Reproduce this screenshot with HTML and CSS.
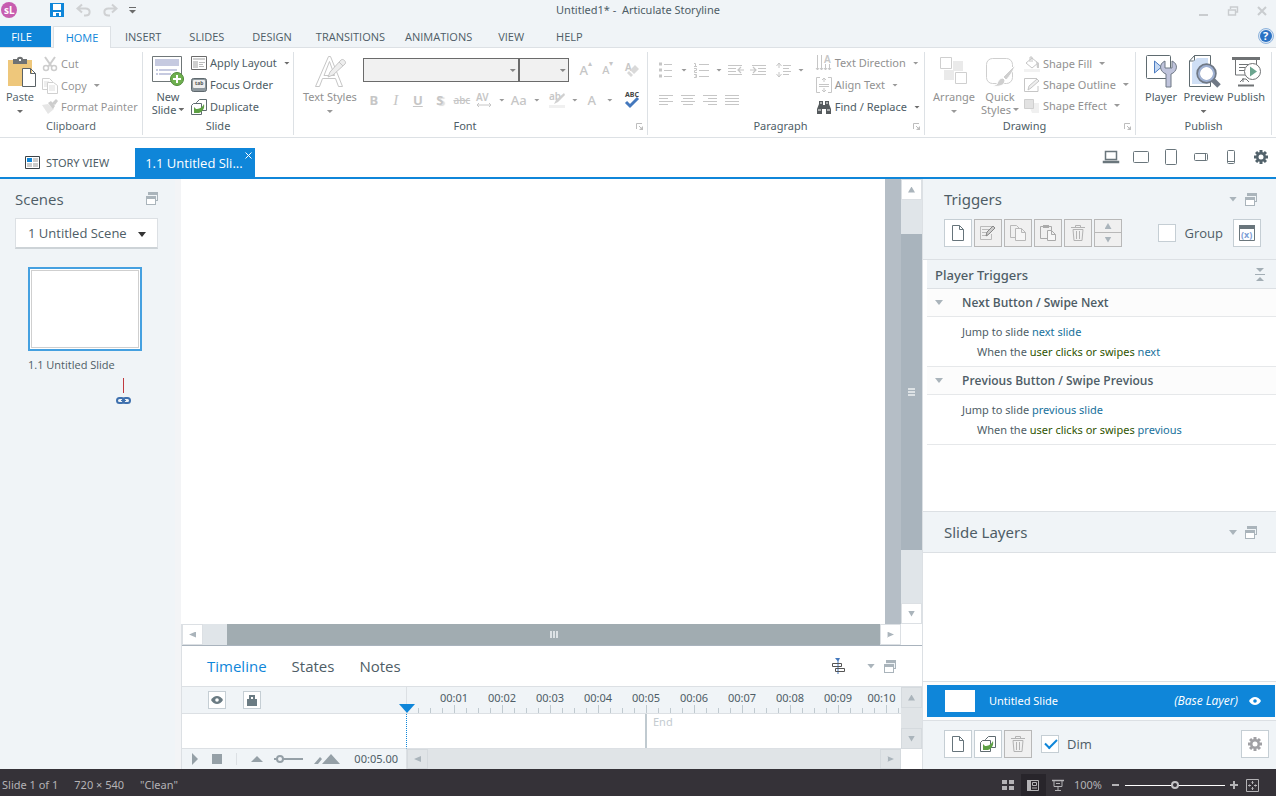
FILE: index.html
```html
<!DOCTYPE html>
<html lang="en">
<head>
    <meta charset="UTF-8">
    <title>Untitled1* - Articulate Storyline</title>
    <link rel="stylesheet" href="styles.css">
</head>
<body>
    <!-- shared icons -->
    <svg class="sprite" width="0" height="0">
        <symbol id="i-page" viewBox="0 0 14 18"><path d="M1.5 1.5h7l4 4v11h-11z M8.5 1.5v4h4" fill="#fff" stroke="currentColor"/></symbol>
        <symbol id="i-copy" viewBox="0 0 18 18"><path d="M1.5 1.5h6l3 3v9h-9z" fill="none" stroke="currentColor"/><path d="M6.5 4.5h6l4 4v8h-10z M12.5 4.5v4h4" fill="#f6f6f6" stroke="currentColor"/></symbol>
        <symbol id="i-trash" viewBox="0 0 16 18"><path d="M1 3.5h14 M5.500 3.500v-2h5v2 M3 5.500l1 11h8l1-11z M6.500 7v8 M9.500 7v8" fill="none" stroke="#b3b3b3"/></symbol>
        <symbol id="i-window" viewBox="0 0 12 13"><path d="M2 0h10v9H9V4H2z" fill="#aab4bb"/><path d="M4 3h7v5h-1V4H2V3z" fill="#f0f4f7"/><path d="M0 4h10v9H0z" fill="#aab4bb"/><path d="M1 7h8v5H1z" fill="#fff"/></symbol>
        <symbol id="i-dup" viewBox="0 0 16 16"><path d="M5.500 3.500l3-3h7v11h-10z M3.500 5.500h7v8h-7z" fill="#fff" stroke="#5f6b70"/><path d="M.5 6.500l2-2h8v11H.5z" fill="#fff" stroke="#5f6b70"/><path d="M3 8l2 2c3 0 6-1 8-5 1 5-2 8-5 9H3z" fill="#5da044"/></symbol>
        <symbol id="i-launch" viewBox="0 0 8 8"><path d="M.5 6V.5H6 M3 3l3 3" fill="none" stroke="#bdbdbd"/><path d="M7 3v4H3z" fill="#bdbdbd"/></symbol>
        <symbol id="i-eye" viewBox="0 0 12 8"><path d="M0 4C3-1.300 9-1.300 12 4 9 9.300 3 9.300 0 4z" fill="currentColor"/><circle cx="6" cy="4" r="1.800" class="pupil"/></symbol>
        <symbol id="i-gear" viewBox="-8 -8 16 16"><g fill="currentColor"><path d="M-1.500-7h3v14h-3z"/><path d="M-1.500-7h3v14h-3z" transform="rotate(45)"/><path d="M-1.500-7h3v14h-3z" transform="rotate(90)"/><path d="M-1.500-7h3v14h-3z" transform="rotate(135)"/><circle r="5"/></g><circle r="2.500" fill="#fff"/></symbol>
    </svg>

    <header class="titlebar">
        <div class="quick">
            <svg class="logo" width="16" height="18" viewBox="0 0 16 18"><circle cx="8" cy="9" r="8" fill="#c75db0"/><text x="3" y="13" class="logo-text">sL</text></svg>
            <button class="icon-btn" aria-label="Save"><svg width="14" height="14" viewBox="0 0 14 14"><path d="M0 0h14v14H0z" fill="#0f86d9"/><path d="M3 1h8v6H3z M3 9h8v4H3z" fill="#fff"/><path d="M6 10h3v3H6z" fill="#0f86d9"/></svg></button>
            <button class="icon-btn" aria-label="Undo" disabled><svg width="15" height="13" viewBox="0 0 15 13"><path d="M6 .5L1.500 4.500 6 8.500 M2 4.500h7.500c5.500 0 5.500 7 0 7H8" fill="none" stroke="#cfd1d3" stroke-width="2"/></svg></button>
            <button class="icon-btn" aria-label="Redo" disabled><svg width="15" height="13" viewBox="0 0 15 13"><path d="M9 .5l4.500 4L9 8.500 M13 4.500H5.500c-5.500 0-5.500 7 0 7H7" fill="none" stroke="#cfd1d3" stroke-width="2"/></svg></button>
            <button class="icon-btn" aria-label="Customize"><svg width="7" height="7" viewBox="0 0 7 7"><path d="M0 .5h7" stroke="#6b6b6b"/><path d="M0 3h7L3.500 6.500z" fill="#6b6b6b"/></svg></button>
        </div>
        <div class="title">Untitled1* -&nbsp; Articulate Storyline</div>
        <div class="winctl">
            <button class="icon-btn" aria-label="Minimize"><svg width="12" height="12" viewBox="0 0 12 12"><path d="M1 10h9" stroke="#c9cccf" stroke-width="2"/></svg></button>
            <button class="icon-btn" aria-label="Restore"><svg width="12" height="12" viewBox="0 0 12 12"><path d="M3.500 4V2h7v5H8 M1.500 5h7v5h-7z" fill="none" stroke="#c9cccf" stroke-width="1.400"/></svg></button>
            <button class="icon-btn" aria-label="Close"><svg width="12" height="12" viewBox="0 0 12 12"><path d="M2 2l8 8M10 2l-8 8" stroke="#c9cccf" stroke-width="2"/></svg></button>
        </div>
    </header>

    <nav class="menu">
        <button class="menu-tab file">FILE</button>
        <button class="menu-tab home">HOME</button>
        <button class="menu-tab">INSERT</button>
        <button class="menu-tab">SLIDES</button>
        <button class="menu-tab">DESIGN</button>
        <button class="menu-tab wide">TRANSITIONS</button>
        <button class="menu-tab wide">ANIMATIONS</button>
        <button class="menu-tab short">VIEW</button>
        <button class="menu-tab short">HELP</button>
        <button class="icon-btn help" aria-label="Help"><svg width="16" height="16" viewBox="0 0 16 16"><circle cx="8" cy="8" r="7.500" fill="#dbe7f5" stroke="#8fb4dd"/><circle cx="8" cy="8" r="6" fill="#2a72c4"/><text x="5" y="12" class="help-text">?</text></svg></button>
    </nav>

    <div class="ribbon">
        <section class="group g-clipboard">
            <div class="group-body">
                <button class="big"><svg width="32" height="32" viewBox="0 0 32 32"><path d="M4 4h24v26H4z" fill="#eec77b"/><path d="M9 3h4c0-3 6-3 6 0h4v5H9z" fill="#6f7274"/><path d="M15 3h2v2h-2z" fill="#fff"/><path d="M18.500 12.500h8l5 5v13h-13z M26.500 12.500v5h5" fill="#fff" stroke="#5b6266"/></svg><span>Paste</span><i class="caret"></i></button>
                <div class="rows">
                    <button class="small" disabled><svg width="16" height="16" viewBox="0 0 16 16"><path d="M3 1l7 10 M13 1L6 11" stroke="#cdcdcd" stroke-width="2"/><circle cx="4" cy="12" r="2.500" fill="none" stroke="#cdcdcd" stroke-width="1.500"/><circle cx="12" cy="12" r="2.500" fill="none" stroke="#cdcdcd" stroke-width="1.500"/></svg>Cut</button>
                    <button class="small" disabled><svg width="16" height="16" viewBox="0 0 16 16"><path d="M.5.5h7l3 3v8H.5z" fill="#fff" stroke="#d0d0d0"/><path d="M2 4h5M2 6h5M2 8h5" stroke="#ddd"/><path d="M5.500 4.500h6l4 3v8h-10z" fill="#fff" stroke="#d0d0d0"/><path d="M7 8h6M7 10h6M7 12h6" stroke="#ddd"/></svg>Copy<i class="caret"></i></button>
                    <button class="small" disabled><svg width="16" height="16" viewBox="0 0 16 16"><path d="M0 6l6-1 6 5-6 5z" fill="#e6e6e6"/><path d="M6 4l3-2 4 5-2 3z M10 4l4-4 2 2-3 4z" fill="#cdcdcd"/></svg>Format Painter</button>
                </div>
            </div>
            <h2>Clipboard</h2>
        </section>

        <section class="group g-slide">
            <div class="group-body">
                <button class="big"><svg width="32" height="32" viewBox="0 0 32 32"><path d="M.5.5h29v25H.5z" fill="#fff" stroke="#6f7678"/><path d="M3 3h24v7H3z" fill="#c6cae0"/><path d="M4 14h2M4 18h2M7 14h18M7 18h12" stroke="#c6cae0" stroke-width="2"/><circle cx="25" cy="23" r="6.500" fill="#6fb04f" stroke="#4e8a38"/><path d="M21 23h8M25 19v8" stroke="#fff" stroke-width="2"/></svg><span>New</span><span>Slide<i class="caret"></i></span></button>
                <div class="rows">
                    <button class="small"><svg width="16" height="16" viewBox="0 0 16 16"><path d="M.5 1.500h15v13H.5z" fill="#fff" stroke="#6b6b6b"/><path d="M2 3h12v2H2z M2 6h5v7H2z" fill="#cfcfcf"/><path d="M8 7.500h6M8 9.500h4M8 11.500h5" stroke="#bbb"/></svg>Apply Layout<i class="caret"></i></button>
                    <button class="small"><svg width="16" height="16" viewBox="0 0 16 16"><rect x=".5" y="1.500" width="15" height="13" rx="2" fill="#8d979d" stroke="#5f696e"/><rect x="2" y="3" width="12" height="8" rx="1" fill="#eee"/><text x="4" y="8" class="tab-text">tab</text></svg>Focus Order</button>
                    <button class="small"><svg width="16" height="16"><use href="#i-dup"/></svg>Duplicate</button>
                </div>
            </div>
            <h2>Slide</h2>
        </section>

        <section class="group g-font">
            <div class="group-body">
                <button class="big" disabled><svg width="32" height="32" viewBox="0 0 32 32"><path d="M1.500 30.500h4l3-8h13l3 8h4L16.500.500h-2zM10 19.500l5.500-14 5 14z" fill="#fff" stroke="#c6c6c6"/><path d="M14 21l2-5L27 4c2-2 6 2 4 4L19 19z M25 6l4 4" fill="#eee" stroke="#c6c6c6"/></svg><span>Text Styles</span><i class="caret"></i></button>
                <div class="font-tools">
                    <div class="tool-row">
                        <span class="pick font-name"><select aria-label="Font" disabled></select></span>
                        <span class="pick font-size"><select aria-label="Font size" disabled></select></span>
                        <button class="glyph first" disabled>A<sup>▴</sup></button>
                        <button class="glyph smaller" disabled>A<sup>▾</sup></button>
                        <button class="glyph last" aria-label="Clear formatting" disabled><svg width="16" height="16" viewBox="0 0 16 16"><text x="1" y="9" class="dis-text">A</text><path d="M11 3l4 4-5 5-4-4z M5 9l4 4-2 2-4-4z" fill="#d9d9d9"/></svg></button>
                    </div>
                    <div class="tool-row">
                        <button class="glyph" disabled><b>B</b></button>
                        <button class="glyph ital" disabled><i>I</i></button>
                        <button class="glyph" disabled><b><u>U</u></b></button>
                        <button class="glyph shadow" disabled><b>S</b></button>
                        <button class="glyph tiny" disabled><s>abc</s></button>
                        <button class="glyph" aria-label="Character spacing" disabled><svg width="16" height="16" viewBox="0 0 16 16"><text x="0" y="9" class="dis-text">AV</text><path d="M1 13h14M3 11l-2 2 2 2M13 11l2 2-2 2" fill="none" stroke="#c6c6c6"/></svg></button>
                        <i class="caret cell"></i>
                        <button class="glyph" disabled>Aa</button>
                        <i class="caret cell"></i>
                        <button class="glyph spaced" aria-label="Highlight" disabled><svg width="16" height="16" viewBox="0 0 16 16"><text x="0" y="8" class="dis-text">ab</text><path d="M15 1L7 8l-2 4 4-2 7-7z" fill="#d0d0d0"/><path d="M0 13h16v3H0z" fill="#f0f0f0"/></svg></button>
                        <i class="caret cell"></i>
                        <button class="glyph" disabled>A</button>
                        <i class="caret cell"></i>
                        <button class="glyph last" aria-label="Spelling"><svg width="16" height="18" viewBox="0 0 16 18"><text x="1" y="6" class="abc-text">ABC</text><path d="M2 11l4 4 8-8" fill="none" stroke="#4478bd" stroke-width="3"/></svg></button>
                    </div>
                </div>
            </div>
            <h2>Font <button class="launch" aria-label="Font settings"><svg width="8" height="8"><use href="#i-launch"/></svg></button></h2>
        </section>

        <section class="group g-para">
            <div class="group-body">
                <div class="para-tools">
                    <div class="tool-row">
                        <button class="glyph" aria-label="Bullets" disabled><svg width="14" height="16" viewBox="0 0 14 16"><path d="M0 2h3M0 8h3M0 14h3" stroke="#c6c6c6" stroke-width="3"/><path d="M5 2.500h8M5 8.500h8M5 14.500h8" stroke="#c6c6c6"/></svg></button>
                        <i class="caret cell"></i>
                        <button class="glyph" aria-label="Numbering" disabled><svg width="15" height="16" viewBox="0 0 15 16"><path d="M0 1.500h1.500V4M0 4.500h3M0 6.500h2.500v2h-2v2h2.500M0 12.500h2.500v3H0M1 14h1" fill="none" stroke="#c6c6c6"/><path d="M5 2.500h10M5 8.500h10M5 14.500h10" stroke="#c6c6c6"/></svg></button>
                        <i class="caret cell"></i>
                        <button class="glyph" aria-label="Decrease indent" disabled><svg width="16" height="12" viewBox="0 0 16 12"><path d="M0 1.500h14M0 4.500h8M0 7.500h8M0 10.500h14M10 6h6M13 3l-3 3 3 3" fill="none" stroke="#c6c6c6" stroke-width="1.200"/></svg></button>
                        <button class="glyph" aria-label="Increase indent" disabled><svg width="16" height="12" viewBox="0 0 16 12"><path d="M2 1.500h14M8 4.500h8M8 7.500h8M2 10.500h14M0 6h6M3 3l3 3-3 3" fill="none" stroke="#c6c6c6" stroke-width="1.200"/></svg></button>
                        <button class="glyph spaced" aria-label="Line spacing" disabled><svg width="15" height="16" viewBox="0 0 15 16"><path d="M3 1v5M3 10v5M.5 4L3 1l2.500 3M.5 12L3 15l2.500-3M7 3.500h8M7 6.500h6M7 9.500h8M7 12.500h6" fill="none" stroke="#c6c6c6"/></svg></button>
                        <i class="caret cell"></i>
                    </div>
                    <div class="tool-row">
                        <button class="glyph" aria-label="Align left" disabled><svg width="14" height="11" viewBox="0 0 14 11"><path d="M0 .5h14M0 3.500h9M0 6.500h14M0 9.500h9" stroke="#c6c6c6"/></svg></button>
                        <button class="glyph" aria-label="Center" disabled><svg width="14" height="11" viewBox="0 0 14 11"><path d="M0 .5h14M2 3.500h10M0 6.500h14M2 9.500h10" stroke="#c6c6c6"/></svg></button>
                        <button class="glyph" aria-label="Align right" disabled><svg width="14" height="11" viewBox="0 0 14 11"><path d="M0 .5h14M5 3.500h9M0 6.500h14M5 9.500h9" stroke="#c6c6c6"/></svg></button>
                        <button class="glyph" aria-label="Justify" disabled><svg width="14" height="11" viewBox="0 0 14 11"><path d="M0 .5h14M0 3.500h14M0 6.500h14M0 9.500h14" stroke="#c6c6c6"/></svg></button>
                    </div>
                </div>
                <div class="rows">
                    <button class="small" disabled><svg width="16" height="16" viewBox="0 0 16 16"><path d="M1.500 0v15M5.500 0v15M9.500 9v6M13.500 9v6M0 13l1.500 2L3 13M4 13l1.500 2L7 13M8 13l1.500 2 1.500-2M12 13l1.500 2 1.500-2" fill="none" stroke="#c6c6c6"/><text x="8" y="8" class="dis-text">A</text></svg>Text Direction<i class="caret"></i></button>
                    <button class="small" disabled><svg width="16" height="16" viewBox="0 0 16 16"><path d="M4 .5H.5v15H4M12 .5h3.500v15H12M8 1v4M8 11v4M6 3l2-2 2 2M6 13l2 2 2-2M3 7.500h10M3 9.500h10" fill="none" stroke="#c6c6c6"/></svg>Align Text<i class="caret"></i></button>
                    <button class="small"><svg width="16" height="16" viewBox="0 0 16 16"><path d="M3 2h4v4h2V2h4v3l2 5v5h-5v-5H6v5H1v-5l2-5z" fill="#555a5d"/><path d="M2 11h3M11 11h3M4 4h2M10 4h2" stroke="#fff"/></svg>Find / Replace<i class="caret"></i></button>
                </div>
            </div>
            <h2>Paragraph <button class="launch" aria-label="Paragraph settings"><svg width="8" height="8"><use href="#i-launch"/></svg></button></h2>
        </section>

        <section class="group g-draw">
            <div class="group-body">
                <button class="big" disabled><svg width="32" height="32" viewBox="0 0 32 32"><path d="M15 5h10v10H15z M6 14h10v10H6z" fill="#eaeaea"/><path d="M2.500 1.500h11v11h-11z M17.500 16.500h11v11h-11z" fill="#fff" stroke="#cfcfcf"/></svg><span>Arrange</span><i class="caret"></i></button>
                <button class="big" disabled><svg width="32" height="32" viewBox="0 0 32 32"><rect x="2.500" y="2.500" width="26" height="25" rx="6" fill="#fff" stroke="#cfcfcf"/><path d="M31 9L19 21l3 3c4-4 8-10 9-15z" fill="#cfcfcf" stroke="#fff"/><path d="M19 22c-3 0-5 3-6 6l-4 2c5 1 12 0 12-6z" fill="#cfcfcf" stroke="#fff"/></svg><span>Quick</span><span>Styles<i class="caret"></i></span></button>
                <div class="rows">
                    <button class="small" disabled><svg width="16" height="16" viewBox="0 0 16 16"><path d="M8 2l6 5-6 5-6-5zM6 6V1h2v5" fill="#fff" stroke="#c6c6c6"/><path d="M12 5l3 2v5h-2z" fill="#ccc"/><path d="M0 13h16v3H0z" fill="#f2f2f2"/></svg>Shape Fill<i class="caret"></i></button>
                    <button class="small" disabled><svg width="16" height="16" viewBox="0 0 16 16"><path d="M13 1.500H.5v13H14V9" fill="none" stroke="#c6c6c6"/><path d="M4 13l1-4 8-7 2 2-8 7z" fill="#eee" stroke="#c6c6c6"/></svg>Shape Outline<i class="caret"></i></button>
                    <button class="small" disabled><svg width="16" height="16" viewBox="0 0 16 16"><path d="M4 5h11v10H8z" fill="#f0f0f0"/><path d="M.5 1.500h9v9h-9z" fill="#e2e2e2" stroke="#cfcfcf"/></svg>Shape Effect<i class="caret"></i></button>
                </div>
            </div>
            <h2>Drawing <button class="launch" aria-label="Drawing settings"><svg width="8" height="8"><use href="#i-launch"/></svg></button></h2>
        </section>

        <section class="group g-publish">
            <div class="group-body">
                <button class="big"><svg width="32" height="32" viewBox="0 0 32 32"><rect x="1.500" y="-.5" width="24" height="23" rx="1" fill="#fff" stroke="#5f6b70"/><path d="M9.500 5v12l7-6z" fill="#c5d8f2" stroke="#4c7bc0"/><path d="M20 5c-7 3-5 11 1 13v13h5V18c6-2 8-10 1-13v7h-7z" fill="#c0c4dc" stroke="#6f7885"/></svg><span>Player</span></button>
                <button class="big"><svg width="32" height="32" viewBox="0 0 32 32"><path d="M6.500-.5h16v31h-21V5z M6.500-.5V5h-5" fill="#fff" stroke="#5f6b70"/><path d="M4 7l5-5h11v26H4z" fill="#cfdff5"/><path d="M24 23l7 7" stroke="#6f7885" stroke-width="5"/><circle cx="18.500" cy="17.500" r="8.500" fill="#fff" stroke="#6f7885" stroke-width="3.500"/><circle cx="18.500" cy="17.500" r="7.500" fill="none" stroke="#9fb1d3" stroke-width="2"/></svg><span>Preview</span><i class="caret"></i></button>
                <button class="big"><svg width="32" height="32" viewBox="0 0 32 32"><path d="M2 2.500h28" stroke="#6f7274" stroke-width="3"/><path d="M5.500 4v15H26.500V4" fill="#fff" stroke="#6f7274"/><path d="M9 8.500h12M9 11.500h6M9 14.500h5M13 22v4M10 26l3-3h3l3 3" fill="none" stroke="#6f7274"/><path d="M8 29.500h16" stroke="#6f7274" stroke-width="2"/><circle cx="22.500" cy="15.500" r="8" fill="#fff" stroke="#6f7274"/><path d="M20 10.500v10l7-5z" fill="#6ba58f"/></svg><span>Publish</span></button>
            </div>
            <h2>Publish</h2>
        </section>
    </div>

    <div class="doctabs">
        <button class="doctab"><svg width="15" height="13" viewBox="0 0 15 13"><path d="M.5.5h14v12H.5z" fill="#fff" stroke="#3c4246"/><path d="M2 2h5v4H2z" fill="#0f86d9"/><path d="M8 2h5v4H8zM2 7h5v4H2zM8 7h5v4H8z" fill="#ccc"/></svg>STORY VIEW</button>
        <div class="doctab active"><span>1.1 Untitled Sli...</span><button class="close" aria-label="Close tab"><svg width="7" height="7" viewBox="0 0 7 7"><path d="M.5.5l6 6M6.500.5l-6 6" stroke="#fff"/></svg></button></div>
        <div class="devices">
            <button aria-label="Desktop"><svg width="16" height="14" viewBox="0 0 16 14"><path d="M2.500 1.500h11v8h-11z M.5 11.500h15v1H.5z" fill="#fff" stroke="#6a767c" stroke-width="1.500"/></svg></button>
            <button aria-label="Tablet landscape"><svg width="16" height="14" viewBox="0 0 16 14"><rect x=".5" y="1.500" width="15" height="11" rx="1" fill="#fff" stroke="#6a767c"/></svg></button>
            <button aria-label="Tablet portrait"><svg width="12" height="16" viewBox="0 0 12 16"><rect x=".5" y=".5" width="11" height="15" rx="1" fill="#fff" stroke="#6a767c"/></svg></button>
            <button aria-label="Phone landscape"><svg width="14" height="9" viewBox="0 0 14 9"><rect x=".5" y=".5" width="13" height="7" rx="1" fill="#fff" stroke="#6a767c"/><path d="M11.500 1v6" stroke="#6a767c"/></svg></button>
            <button aria-label="Phone portrait"><svg width="8" height="14" viewBox="0 0 8 14"><rect x=".5" y=".5" width="7" height="13" rx="1" fill="#fff" stroke="#6a767c"/><path d="M1 11.500h6" stroke="#6a767c"/></svg></button>
            <button class="settings" aria-label="Player settings"><svg width="16" height="16"><use href="#i-gear"/></svg></button>
        </div>
    </div>

    <main class="workspace">
        <aside class="scenes">
            <div class="panel-title"><h3>Scenes</h3><svg width="12" height="13"><use href="#i-window"/></svg></div>
            <span class="pick scene"><select aria-label="Scene"><option>1 Untitled Scene</option></select></span>
            <figure class="thumb">
                <div class="thumb-frame"></div>
                <figcaption>1.1 Untitled Slide</figcaption>
                <svg width="15" height="27" viewBox="0 0 15 27"><path d="M7.500 0v15" stroke="#c0393f"/><rect x="1" y="20" width="7" height="5" rx="2.500" fill="none" stroke="#3f70ae" stroke-width="2"/><rect x="7" y="20" width="7" height="5" rx="2.500" fill="none" stroke="#3f70ae" stroke-width="2"/><path d="M5 22.500h5" stroke="#3f70ae"/></svg>
            </figure>
        </aside>

        <section class="center">
            <div class="stage">
                <div class="slide"></div>
                <div class="vscroll">
                    <button class="sb" aria-label="Scroll up"><i class="tri up"></i></button>
                    <div class="v-track"><div class="v-thumb"><i class="grip"></i></div></div>
                    <button class="sb" aria-label="Scroll down"><i class="tri down"></i></button>
                </div>
                <div class="hscroll">
                    <button class="sb" aria-label="Scroll left"><i class="tri left"></i></button>
                    <div class="h-thumb"><i class="grip turned"></i></div>
                    <button class="sb" aria-label="Scroll right"><i class="tri right"></i></button>
                </div>
            </div>

            <div class="timeline">
                <div class="tl-tabs">
                    <button class="on">Timeline</button><button>States</button><button>Notes</button>
                    <div class="tl-icons">
                        <svg width="16" height="16" viewBox="0 0 16 16"><path d="M4 0h5L7.500 3v13h-1V3z" fill="#4478bd"/><path d="M1.500 5.500h9v3h-9z M4.500 10.500h9v3h-9z" fill="none" stroke="#555"/></svg>
                        <i class="tri down wide"></i>
                        <svg width="12" height="13"><use href="#i-window"/></svg>
                    </div>
                </div>
                <div class="tl-grid">
                    <div class="tl-head">
                        <button class="mini" aria-label="Show all"><svg width="12" height="8"><use href="#i-eye"/></svg></button>
                        <button class="mini" aria-label="Lock all"><svg width="10" height="11" viewBox="0 0 10 11"><path d="M0 4h10v7H0z" fill="#6a7b83"/><path d="M3 5V1h4v4" fill="none" stroke="#6a7b83" stroke-width="2"/></svg></button>
                    </div>
                    <div class="ruler">
                        <span>00:01</span><span>00:02</span><span>00:03</span><span>00:04</span><span>00:05</span><span>00:06</span><span>00:07</span><span>00:08</span><span>00:09</span><span>00:10</span>
                        <i class="playhead"></i>
                    </div>
                    <div class="tl-scroll">
                        <button class="sb" aria-label="Scroll up"><i class="tri up"></i></button>
                        <button class="sb" aria-label="Scroll down"><i class="tri down"></i></button>
                    </div>
                    <div class="tl-names"></div>
                    <div class="track"><div class="segment"></div><span>End</span></div>
                    <div class="tl-controls">
                        <button aria-label="Play"><svg width="6" height="12" viewBox="0 0 6 12"><path d="M0 0l6 6-6 6z" fill="#95a0a7"/></svg></button>
                        <button aria-label="Stop"><svg width="10" height="10" viewBox="0 0 10 10"><path d="M0 0h10v10H0z" fill="#95a0a7"/></svg></button>
                        <i class="rule"></i>
                        <svg width="12" height="6" viewBox="0 0 12 6"><path d="M0 6l6-6 6 6z" fill="#95a0a7"/></svg>
                        <input type="range" class="tl-zoom" min="0" max="100" value="10" aria-label="Timeline zoom">
                        <svg width="26" height="10" viewBox="0 0 26 10"><path d="M8 10l9-10 9 10z M0 10l6-7 2 2-4 5z" fill="#95a0a7"/></svg>
                        <time>00:05.00</time>
                    </div>
                    <div class="tl-hscroll">
                        <button class="sb" aria-label="Scroll left"><i class="tri left"></i></button>
                        <button class="sb" aria-label="Scroll right"><i class="tri right"></i></button>
                    </div>
                </div>
            </div>
        </section>

        <aside class="right">
            <section class="triggers">
                <div class="panel-head">
                    <div class="panel-title"><h3>Triggers</h3><i class="tri down wide"></i><svg width="12" height="13"><use href="#i-window"/></svg></div>
                    <div class="toolbar">
                        <button class="tool" aria-label="New trigger"><svg width="14" height="18"><use href="#i-page"/></svg></button>
                        <button class="tool" aria-label="Edit trigger" disabled><svg width="18" height="18" viewBox="0 0 18 18"><path d="M13 2.500H1.500v13h11V10 M3 5.500h7M3 8.500h5M3 11.500h6" fill="none" stroke="#bbb"/><path d="M7 12l1-4 6-6 2 2-6 6z" fill="#ccc" stroke="#888"/></svg></button>
                        <button class="tool" aria-label="Copy trigger" disabled><svg width="18" height="18"><use href="#i-copy"/></svg></button>
                        <button class="tool" aria-label="Paste trigger" disabled><svg width="18" height="18" viewBox="0 0 18 18"><path d="M1.500 2.500h11v12h-11z" fill="none" stroke="#aaa"/><path d="M4 1h6v3H4z" fill="#aaa"/><path d="M8.500 6.500h4l4 4v6h-8z M12.500 6.500v4h4" fill="#f6f6f6" stroke="#aaa"/></svg></button>
                        <button class="tool" aria-label="Delete trigger" disabled><svg width="16" height="18"><use href="#i-trash"/></svg></button>
                        <div class="updown"><button aria-label="Move up" disabled><i class="tri up"></i></button><button aria-label="Move down" disabled><i class="tri down"></i></button></div>
                        <label class="check push"><input type="checkbox">Group</label>
                        <button class="tool" aria-label="Variables"><svg width="16" height="16" viewBox="0 0 16 16"><path d="M.5.5h15v15H.5z" fill="#fff" stroke="#6a767c"/><path d="M0 0h16v4H0z" fill="#6a767c"/><text x="2" y="13" class="var-text">(x)</text></svg></button>
                    </div>
                </div>
                <div class="trigger-list">
                    <div class="list-title"><h4>Player Triggers</h4><svg width="10" height="13" viewBox="0 0 10 13"><path d="M1 0h8L5 4z M1 13h8L5 9z" fill="#a3aeb5"/><path d="M0 6.500h10" stroke="#a3aeb5"/></svg></div>
                    <h5><i class="tri down wide"></i>Next Button / Swipe Next</h5>
                    <div class="trigger"><p>Jump to slide <a href="#">next slide</a></p><p class="when">When the <a href="#" class="event">user clicks or swipes</a> <a href="#">next</a></p></div>
                    <h5><i class="tri down wide"></i>Previous Button / Swipe Previous</h5>
                    <div class="trigger"><p>Jump to slide <a href="#">previous slide</a></p><p class="when">When the <a href="#" class="event">user clicks or swipes</a> <a href="#">previous</a></p></div>
                </div>
            </section>
            <section class="layers">
                <div class="panel-title"><h3>Slide Layers</h3><i class="tri down wide"></i><svg width="12" height="13"><use href="#i-window"/></svg></div>
                <div class="layer-space"></div>
                <div class="layer-wrap">
                    <div class="layer"><i class="preview"></i><span>Untitled Slide</span><em>(Base Layer)</em><svg width="12" height="8"><use href="#i-eye"/></svg></div>
                </div>
                <div class="toolbar foot">
                    <button class="tool" aria-label="New layer"><svg width="14" height="18"><use href="#i-page"/></svg></button>
                    <button class="tool" aria-label="Duplicate layer"><svg width="16" height="16"><use href="#i-dup"/></svg></button>
                    <button class="tool" aria-label="Delete layer" disabled><svg width="16" height="18"><use href="#i-trash"/></svg></button>
                    <label class="check dim"><input type="checkbox" checked>Dim</label>
                    <button class="tool push grey" aria-label="Layer properties"><svg width="16" height="16"><use href="#i-gear"/></svg></button>
                </div>
            </section>
        </aside>
    </main>

    <footer class="status">
        <span>Slide 1 of 1</span><span>720 × 540</span><span>"Clean"</span>
        <div class="view">
            <button aria-label="Grid view"><svg width="12" height="10" viewBox="0 0 12 10"><path d="M0 0h5v4H0zM7 0h5v4H7zM0 6h5v4H0zM7 6h5v4H7z" fill="#b4b3b6"/></svg></button>
            <button class="pressed" aria-label="Normal view"><svg width="12" height="11" viewBox="0 0 12 11"><path d="M.5.5h11v10H.5z" fill="none" stroke="#b4b3b6"/><path d="M0 0h4v11H0z" fill="#b4b3b6"/><path d="M5.500 2.500h4v3h-4z M5 8h5" fill="none" stroke="#b4b3b6"/></svg></button>
            <button aria-label="Preview"><svg width="12" height="11" viewBox="0 0 12 11"><path d="M0 .5h12" stroke="#b4b3b6" stroke-width="1.500"/><path d="M2 1v5.500h8V1M4 3.500h4M6 7v3M3 10.500h6" fill="none" stroke="#b4b3b6"/></svg></button>
            <span class="percent">100%</span>
            <button class="step" aria-label="Zoom out"><svg width="8" height="8" viewBox="0 0 8 8"><path d="M0 4h7" stroke="#b4b3b6" stroke-width="2"/></svg></button>
            <input type="range" class="zoom" min="0" max="100" value="50" aria-label="Zoom">
            <button class="step" aria-label="Zoom in"><svg width="8" height="8" viewBox="0 0 8 8"><path d="M0 4h8M4 0v8" stroke="#b4b3b6" stroke-width="2"/></svg></button>
            <button class="fit" aria-label="Fit to window"><svg width="13" height="13" viewBox="0 0 13 13"><path d="M.5.5h12v12H.5zM6.500 2v3M6.500 8v3M2 6.500h3M8 6.500h3M5.500 3.500h2M5.500 9.500h2M3.500 5.500v2M9.500 5.500v2" fill="none" stroke="#b4b3b6"/></svg></button>
        </div>
    </footer>
</body>
</html>
```
FILE: styles.css
```css
* {
    box-sizing: border-box;
}
body {
    margin: 0;
    height: 100vh;
    display: flex;
    flex-direction: column;
    overflow: hidden;
    background: #fff;
    color: #4e5d66;
    font: 11px/16px "Noto Sans", "Open Sans", sans-serif;
}
button, select, input {
    font: inherit;
    color: inherit;
}
button {
    display: flex;
    align-items: center;
    justify-content: center;
    padding: 0;
    border: 0;
    background: none;
    white-space: nowrap;
}
svg {
    display: block;
    flex: none;
    overflow: visible;
}
.sprite {
    position: absolute;
}
h2, h3, h4, h5, p, figure {
    margin: 0;
    font-weight: normal;
}
a {
    color: #17719c;
    text-decoration: none;
}
.menu, .scene, .tl-tabs, .check, .scenes, .g-clipboard, .trigger-list h5, .layer em {
    font-family: "Open Sans", "Noto Sans", sans-serif;
}

/* arrows */
.caret {
    flex: none;
    width: 6px;
    height: 3px;
    background: #6b6b6b;
    clip-path: polygon(0 0, 100% 0, 50% 100%);
}
.caret.cell {
    margin: 0 3px 0 4px;
    background: #999;
}
.tri {
    flex: none;
    width: 7px;
    height: 6px;
    background: #aab4bb;
}
.tri.wide {
    width: 8px;
    height: 5px;
}
.tri.up { clip-path: polygon(50% 0, 100% 100%, 0 100%); }
.tri.down { clip-path: polygon(0 0, 100% 0, 50% 100%); }
.tri.left { clip-path: polygon(100% 0, 100% 100%, 0 50%); }
.tri.right { clip-path: polygon(0 0, 100% 50%, 0 100%); }

/* title bar */
.titlebar {
    display: grid;
    grid-template-columns: 1fr auto 1fr;
    height: 26px;
    background: #f0f4f7;
}
.quick {
    display: flex;
    align-items: center;
    height: 20px;
}
.logo {
    margin: 0 26px 0 1px;
}
.logo-text {
    font-size: 10px;
    font-weight: bold;
    fill: #fff;
}
.quick .icon-btn {
    width: 27px;
}
.quick .icon-btn:last-child {
    width: 16px;
}
.title {
    line-height: 20px;
}
.winctl {
    display: flex;
    justify-content: flex-end;
}
.winctl .icon-btn {
    width: 29px;
    height: 22px;
}

/* menu */
.menu {
    display: flex;
    height: 22px;
    border-bottom: 1px solid #dde1e5;
    background: #f0f4f7;
}
.menu-tab {
    padding: 0 14px;
}
.menu-tab.wide { padding: 0 10px; }
.menu-tab.short { padding: 0 16px; }
.menu-tab.file {
    width: 51px;
    padding: 0 8px 0 0;
    color: #fff;
    background: #0f86d9;
}
.menu-tab.home {
    width: 58px;
    height: 22px;
    margin-left: 2px;
    padding: 0;
    color: #0f86d9;
    background: #fff;
    border: 1px solid #dde1e5;
    border-bottom: 0;
}
.help {
    margin: 1px 2px 0 auto;
    height: 18px;
}
.help-text {
    font-size: 11px;
    font-weight: bold;
    fill: #fff;
}

/* ribbon */
.ribbon {
    display: flex;
    padding: 4px 0 2px;
    border-bottom: 1px solid #dde1e5;
}
.group {
    flex: none;
    height: 83px;
    border-right: 1px solid #dde1e5;
}
.g-clipboard { width: 143px; }
.g-slide { width: 151px; }
.g-font { width: 354px; }
.g-para { width: 277px; }
.g-draw { width: 211px; }
.g-publish { width: 136px; }
.group-body {
    display: flex;
    height: 66px;
    padding: 0 4px;
}
.group h2 {
    display: flex;
    justify-content: center;
    font-size: 11px;
    line-height: 16px;
}
.launch {
    width: 8px;
    margin: 2px 3px 0 0;
}
.group h2:has(.launch) {
    justify-content: space-between;
}
.group h2:has(.launch)::before {
    content: "";
}
.big {
    flex-direction: column;
    justify-content: flex-start;
    padding-top: 4px;
    line-height: 13px;
}
.big svg {
    margin-bottom: 2px;
}
.big > .caret {
    margin-top: 7px;
}
.big span {
    display: flex;
    align-items: center;
    gap: 2px;
}
.rows {
    display: flex;
    flex-direction: column;
    align-items: flex-start;
}
.small {
    gap: 3px;
    height: 22px;
}
.small .caret {
    margin-left: 4px;
}
button:disabled {
    color: #919191;
}
button:disabled .caret {
    background: #999;
}
.g-clipboard .big { width: 32px; }
.g-clipboard .rows { margin-left: 6px; padding-top: 1px; }
.g-slide .group-body { padding-left: 9px; }
.g-slide .big { width: 32px; }
.g-slide .rows { margin-left: 7px; }
.g-font .group-body { padding-left: 8px; }
.g-font .big { width: 56px; }
.font-tools {
    width: 281px;
    margin-left: 5px;
}
.tool-row {
    display: flex;
    align-items: center;
    height: 24px;
    margin-top: 6px;
}
.g-para .group-body { justify-content: space-between; }
.para-tools { margin-left: 3px; }
.para-tools .spaced { margin-left: 8px; }
.g-draw .big { width: 46px; }
.g-draw .group-body { padding-left: 6px; }
.g-draw .rows { margin-left: 1px; padding-top: 1px; }
.g-draw .small { height: 21px; }
.g-publish .group-body { justify-content: space-between; }
.g-publish .big { width: 42px; }

.glyph {
    width: 22px;
    height: 22px;
    font-size: 13px;
}
.glyph:disabled {
    color: #c6c6c6;
    font-weight: 500;
}
.glyph.first { margin-left: 6px; }
.glyph.smaller { font-size: 11px; }
.glyph.spaced { margin-left: 3px; }
.glyph.last { margin-left: auto; }
.glyph.tiny { font-size: 10px; }
.glyph.ital { font-family: "Liberation Serif", serif; font-size: 15px; }
.glyph.shadow { text-shadow: 2px 1px 1px #ddd; }
.glyph sup {
    font-size: 8px;
    line-height: 8px;
    align-self: flex-start;
}
.dis-text {
    font-size: 10px;
    font-weight: 600;
    fill: #c6c6c6;
}
.tab-text { font-size: 5px; font-weight: bold; fill: #555; }
.abc-text { font-size: 7px; font-weight: bold; fill: #444; }
.var-text { font-size: 9px; font-weight: bold; fill: #7ea0d6; }

/* drop-downs */
.pick {
    position: relative;
    display: block;
}
.pick::after {
    content: "";
    position: absolute;
    right: 3px;
    top: 11px;
    width: 6px;
    height: 3px;
    background: #888;
    clip-path: polygon(0 0, 100% 0, 50% 100%);
}
.pick select {
    appearance: none;
    display: block;
    width: 100%;
    height: 24px;
    border: 1px solid #6b6b6b;
    border-radius: 0;
    background: #f1f1f1;
    opacity: 1;
}
.font-name { width: 156px; }
.font-size { width: 50px; }
.font-size select { border-left-width: 1px; }

/* document tabs */
.doctabs {
    display: flex;
    align-items: flex-end;
    height: 41px;
    border-bottom: 2px solid #0f86d9;
}
.doctab {
    display: flex;
    gap: 6px;
    height: 29px;
    margin-left: 25px;
    font-size: 11px;
}
.doctab.active {
    position: relative;
    align-items: center;
    width: 120px;
    margin-left: 26px;
    padding-left: 10px;
    color: #fff;
    background: #0f86d9;
    font-family: "Open Sans", "Noto Sans", sans-serif;
    font-size: 13px;
}
.close {
    position: absolute;
    top: 4px;
    right: 3px;
}
.devices {
    display: flex;
    margin-left: auto;
    height: 40px;
}
.devices button {
    width: 30px;
}
.settings { color: #52626b; }

/* workspace */
.workspace {
    flex: 1;
    min-height: 0;
    display: grid;
    grid-template-columns: 181px 1fr 354px;
}
.panel-title {
    display: flex;
    align-items: center;
    gap: 8px;
    height: 40px;
    padding: 0 19px 0 21px;
}
.panel-title h3 {
    flex: 1;
    font-size: 15px;
    line-height: 20px;
}
.scenes {
    background: #f0f4f7;
    border-right: 6px solid #f3f4f6;
}
.scenes .panel-title {
    height: 39px;
    padding: 0 17px 0 15px;
}
.scene {
    width: 143px;
    margin: 0 0 0 15px;
}
.scene select {
    height: 31px;
    padding: 0 12px;
    font-size: 13px;
    background: #fff;
    border: 1px solid #dce0e4;
    border-bottom: 2px solid #cdd3d7;
}
.scene::after {
    right: 12px;
    top: 14px;
    width: 8px;
    height: 5px;
    background: #333;
}
.thumb {
    display: flex;
    flex-direction: column;
    width: 114px;
    margin: 18px 28px;
}
.thumb-frame {
    height: 84px;
    border: 2px solid #45a0e0;
    outline: 1px solid #cfcfcf;
    outline-offset: -4px;
    background: #fff;
}
.thumb figcaption {
    margin: 6px 0 5px;
}
.thumb svg {
    align-self: flex-end;
    margin-right: 11px;
}

.center {
    display: flex;
    flex-direction: column;
    min-width: 0;
    border-left: 1px solid #dce0e4;
}
.stage {
    flex: 1;
    display: grid;
    grid-template-columns: 1fr 21px;
    grid-template-rows: 1fr 21px;
    border-bottom: 1px solid #a9b3bd;
}
.slide {
    margin-left: -1px;
    background: #fff;
    border-right: 16px solid #b5bec6;
}
.sb {
    flex: none;
    width: 21px;
    height: 21px;
    background: #fff;
    border: 1px solid #dce0e4;
}
.vscroll {
    display: flex;
    flex-direction: column;
    background: #e0e5e9;
}
.v-track {
    flex: 1;
    display: flex;
    flex-direction: column;
    justify-content: center;
    padding: 34px 0 53px;
}
.v-thumb, .h-thumb {
    flex: 1;
    display: flex;
    align-items: center;
    justify-content: center;
    background: #a9b4bd;
}
.hscroll {
    display: flex;
    background: #e0e5e9;
}
.h-thumb {
    margin-left: 24px;
    background: #a1acb1;
}
.grip {
    width: 7px;
    height: 8px;
    background: repeating-linear-gradient(#dde2e5 0 2px, transparent 2px 3px);
}
.grip.turned {
    width: 8px;
    height: 7px;
    background: repeating-linear-gradient(90deg, #dde2e5 0 2px, transparent 2px 3px);
}

/* timeline */
.tl-tabs {
    display: flex;
    align-items: center;
    gap: 25px;
    height: 41px;
    padding: 0 26px 0 25px;
    border-bottom: 1px solid #dce0e4;
    font-size: 15px;
}
.tl-tabs .on {
    color: #0f86d9;
}
.tl-icons {
    display: flex;
    align-items: center;
    gap: 9px;
    margin-left: auto;
}
.tl-icons svg:first-child {
    margin-right: 11px;
}
.tl-grid {
    display: grid;
    grid-template-columns: 225px 1fr 21px;
    grid-template-rows: 27px 35px 20px;
}
.tl-head {
    display: flex;
    align-items: center;
    gap: 17px;
    padding-left: 26px;
    background: #f0f4f7;
    border-right: 1px solid #dce0e4;
    border-bottom: 1px solid #dce0e4;
}
.mini {
    width: 18px;
    height: 18px;
    color: #6a7b83;
    background: #fff;
    border: 1px solid #c5ced4;
}
.pupil { fill: var(--pupil, #fff); }
.ruler {
    position: relative;
    display: flex;
    min-width: 0;
    padding-left: 23px;
    border-bottom: 1px solid #dce0e4;
    background:
        repeating-linear-gradient(90deg, transparent 0 47px, #c0cad0 47px 48px) 0 100% / 100% 8px no-repeat,
        repeating-linear-gradient(90deg, transparent 0 11px, #c0cad0 11px 12px) 0 100% / 100% 5px no-repeat,
        #f0f4f7;
}
.ruler span {
    flex: none;
    width: 48px;
    padding-top: 3px;
    text-align: center;
}
.ruler span:nth-last-child(2) {
    width: 39px;
}
.playhead {
    position: absolute;
    left: -8px;
    bottom: 0;
    width: 16px;
    height: 9px;
    background: #0f86d9;
    clip-path: polygon(0 0, 100% 0, 50% 100%);
}
.tl-scroll {
    grid-row: span 2;
    display: flex;
    flex-direction: column;
    justify-content: space-between;
    background: #e0e4e7;
}
.tl-scroll .sb, .tl-hscroll .sb {
    background: #e0e4e7;
    border-color: #d5dade;
}
.tl-hscroll .sb {
    height: 20px;
}
.tl-names {
    border-right: 1px dotted #0f86d9;
    border-bottom: 1px solid #dce0e4;
}
.track {
    display: flex;
    color: #c3cbd0;
    border-bottom: 1px solid #dce0e4;
}
.segment {
    width: 240px;
    margin-right: 6px;
    border-right: 2px solid #c0cad0;
}
.tl-controls {
    display: flex;
    align-items: center;
    gap: 14px;
    padding: 0 8px 0 10px;
    background: #f0f4f7;
    border-right: 1px solid #dce0e4;
}
.tl-controls .rule {
    width: 1px;
    height: 12px;
    background: #dce0e4;
}
.tl-controls .tl-zoom {
    width: 29px;
    margin: 0 -3px;
}
.tl-controls time {
    margin-left: auto;
}
.tl-hscroll {
    display: flex;
    justify-content: space-between;
    background: #e0e4e7;
}
input[type="range"] {
    appearance: none;
    height: 9px;
    background: linear-gradient(#95a0a7, #95a0a7) 0 50% / 100% 2px no-repeat;
}
input[type="range"]::-webkit-slider-thumb {
    appearance: none;
    width: 8px;
    height: 8px;
    border: 2px solid #95a0a7;
    border-radius: 50%;
    background: #f0f4f7;
}

/* right side */
.right {
    display: flex;
    flex-direction: column;
    border-left: 1px solid #dce0e4;
}
.triggers {
    flex: 333 1 0;
    min-height: 0;
}
.panel-head {
    height: 81px;
    background: #f0f4f7;
    border-bottom: 1px solid #dce0e4;
}
.toolbar {
    display: flex;
    align-items: center;
    gap: 2px;
    padding: 0 15px 0 21px;
}
.tool {
    width: 28px;
    height: 28px;
    color: #66747b;
    background: #fff;
    border: 1px solid #c5ced4;
}
.tool:disabled {
    color: #b8b8b8;
    background: #f0f0f0;
    border-color: #b8b8b8;
}
.tool.grey { color: #a0a0a4; }
.updown button {
    width: 28px;
    height: 14px;
    background: #f0f0f0;
    border: 1px solid #b8b8b8;
}
.updown button + button { border-top: 0; }
.push { margin-left: auto; }
.check {
    display: flex;
    align-items: center;
    gap: 8px;
    margin-right: 8px;
    font-size: 13px;
}
.check.push { margin-left: auto; }
.check.dim { margin-left: 7px; }
.check input {
    appearance: none;
    position: relative;
    width: 18px;
    height: 18px;
    margin: 0;
    background: #fff;
    border: 1px solid #c5ced4;
}
.check input:checked::after {
    content: "";
    position: absolute;
    left: 3px;
    top: 3px;
    width: 10px;
    height: 5px;
    border: solid #0f86d9;
    border-width: 0 0 2px 2px;
    transform: rotate(-45deg);
}
.trigger-list {
    padding-left: 4px;
}
.list-title {
    display: flex;
    align-items: center;
    justify-content: space-between;
    height: 29px;
    padding: 1px 11px 0 8px;
    background: #f0f4f7;
    border-bottom: 1px solid #dce0e4;
}
.list-title h4 {
    font-size: 13px;
    font-weight: 500;
}
.trigger-list h5 {
    display: flex;
    align-items: center;
    gap: 19px;
    height: 28px;
    padding-left: 8px;
    font-size: 12px;
    font-weight: 600;
    background: #fcfcfc;
    border-bottom: 1px solid #e6e8ea;
}
.trigger {
    height: 50px;
    padding: 5px 0 0 35px;
    line-height: 20px;
    border-bottom: 1px solid #e6e8ea;
}
.when { padding-left: 15px; }
.event { color: #2f5400; }
.layers {
    flex: 257 1 0;
    display: flex;
    flex-direction: column;
    background: #f0f4f7;
    border-top: 1px solid #dce0e4;
}
.layer-space {
    flex: 1;
    background: #fff;
    border: solid #dce0e4;
    border-width: 1px 0;
}
.layer-wrap {
    padding: 3px 1px 3px 4px;
    background: #fcfcfc;
    border-bottom: 1px solid #dce0e4;
}
.layer {
    display: flex;
    align-items: center;
    height: 32px;
    padding: 0 14px 0 18px;
    color: #fff;
    background: #0f86d9;
    --pupil: #0f86d9;
}
.preview {
    width: 30px;
    height: 22px;
    margin-right: 14px;
    background: #fff;
}
.layer em {
    margin: 0 11px 0 auto;
    font-size: 12px;
}
.foot {
    height: 48px;
    padding: 0 7px 2px 21px;
}

/* status bar */
.status {
    display: flex;
    align-items: center;
    gap: 16px;
    height: 27px;
    padding: 5px 17px 0 2px;
    color: #b4b3b6;
    background: #353238;
}
.view {
    display: flex;
    align-items: center;
    height: 22px;
    margin-left: auto;
}
.view button {
    width: 25px;
    height: 22px;
}
.view .pressed { background: #28252b; }
.view .percent { margin: 0 8px 0 3px; }
.view .step { width: 12px; }
.view .zoom {
    width: 100px;
    margin: 0 3px;
    background: linear-gradient(#fff, #fff) 0 50% / 100% 1px no-repeat;
}
.view .zoom::-webkit-slider-thumb {
    border-color: #c4c3c6;
    background: #353238;
}
.view .fit { margin-right: -6px; }
```
